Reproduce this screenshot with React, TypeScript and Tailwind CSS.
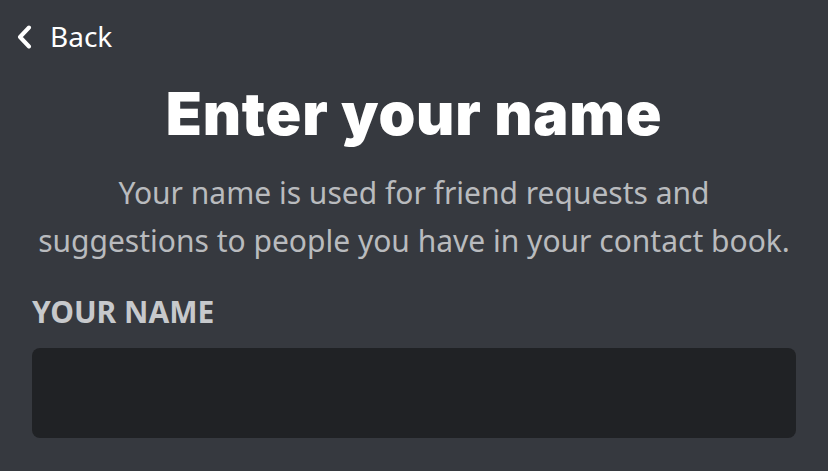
import React from "react";

export default function App() {
  return (
    <div className="w-[828px] h-[471px] bg-[#36393f] overflow-hidden flex flex-col" style={{ fontFamily: '"Noto Sans", "Open Sans", sans-serif' }}>
      <div className="flex items-center h-[38px] mt-[18px] pl-[16px] text-white">
        <svg width="16" height="24" viewBox="0 0 16 24" className="mr-[18px]">
          <path d="M13 2.5 L4 12 L13 21.5" fill="none" stroke="#ffffff" strokeWidth="4" strokeLinecap="round" strokeLinejoin="round" />
        </svg>
        <span className="text-[28px] leading-none -mt-[3px]">Back</span>
      </div>
      <h1 className="mt-[22px] text-center text-white text-[59px] leading-[72px] font-black tracking-[0.8px]" style={{ fontFamily: 'Inter, "Noto Sans", sans-serif' }}>
        Enter your name
      </h1>
      <p className="mt-[19px] text-center text-[#b9bbbe] text-[30px] leading-[48px] px-[10px]">
        Your name is used for friend requests and<br />suggestions to people you have in your contact book.
      </p>
      <div className="mt-[29px] px-[32px]">
        <div className="text-[#c7c9cc] text-[30px] font-bold leading-[36px]">YOUR NAME</div>
        <div className="mt-[18px] h-[90px] rounded-[8px] bg-[#202225]"></div>
      </div>
    </div>
  );
}
